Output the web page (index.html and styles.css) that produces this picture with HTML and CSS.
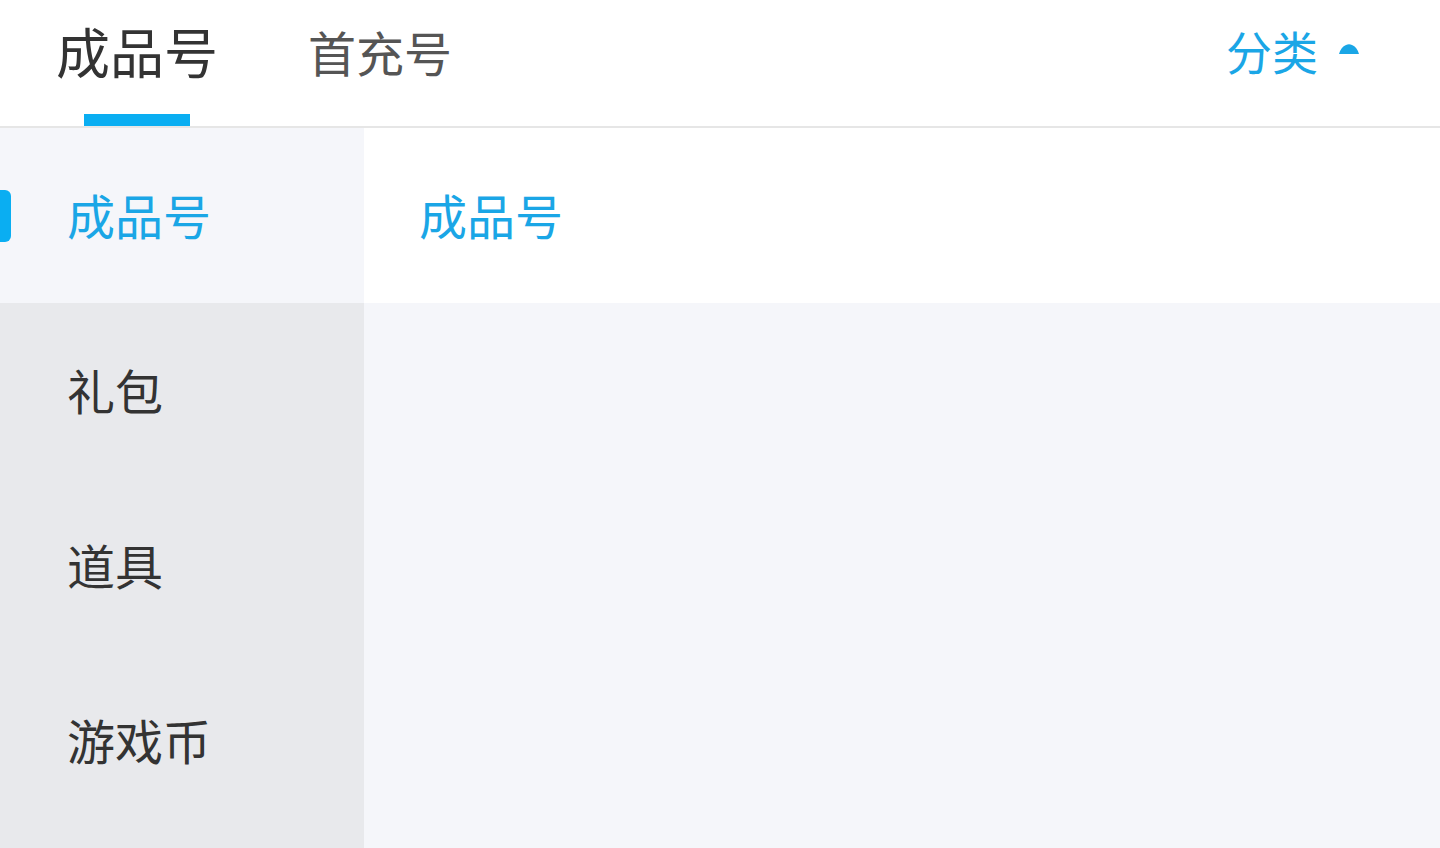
FILE: index.html
```html
<!DOCTYPE html>
<html lang="zh-CN">
<head>
    <meta charset="UTF-8">
    <meta name="viewport" content="width=device-width, initial-scale=1.0">
    <title>分类</title>
    <link rel="stylesheet" href="styles.css">
</head>
<body>
    <!-- 顶部标签 -->
    <div class="top-bar">
        <div class="tabs">
            <div class="tab active">成品号</div>
            <div class="tab">首充号</div>
        </div>
        <div class="category-toggle">
            <span>分类</span>
            <svg class="caret" width="22" height="12" viewBox="0 0 22 12">
                <path d="M1 11 Q3 4 8 2 Q11 0.5 14 2 Q19 4 21 11 Z" fill="#1aa6e6"/>
            </svg>
        </div>
    </div>

    <div class="main">
        <!-- 左侧分类 -->
        <div class="side-menu">
            <div class="side-item active">成品号</div>
            <div class="side-item">礼包</div>
            <div class="side-item">道具</div>
            <div class="side-item">游戏币</div>
        </div>

        <!-- 右侧内容 -->
        <div class="content">
            <div class="content-item">成品号</div>
        </div>
    </div>
</body>
</html>
```

FILE: styles.css
```css
/* 通用 */
body {
    margin: 0;
    padding: 0;
    font-family: "Noto Sans CJK SC", "Noto Sans", sans-serif;
    background-color: #f5f6fa;
    height: 848px;
    overflow: hidden;
}

/* 顶部标签 */
.top-bar {
    height: 126px;
    background-color: #ffffff;
    border-bottom: 2px solid #e6e6e6;
    display: flex;
    justify-content: space-between;
    align-items: stretch;
    padding: 0 80px 0 56px;
}

.tabs {
    display: flex;
    gap: 90px;
}

.tab {
    position: relative;
    font-size: 48px;
    color: #555555;
    padding-top: 21px;
    line-height: 60px;
}

.tab.active {
    font-size: 54px;
    color: #333333;
}

.tab.active::after {
    content: "";
    position: absolute;
    left: 28px;
    bottom: 0;
    width: 106px;
    height: 12px;
    background-color: #0aaef2;
}

.category-toggle {
    display: flex;
    align-items: center;
    gap: 20px;
    height: 100px;
    font-size: 46px;
    color: #1aa6e6;
}

.caret {
    margin-top: -2px;
}

/* 主体 */
.main {
    display: flex;
    height: 720px;
}

.side-menu {
    width: 364px;
    background-color: #e8e9ec;
}

.side-item {
    position: relative;
    height: 175px;
    box-sizing: border-box;
    padding-bottom: 4px;
    display: flex;
    align-items: center;
    padding-left: 67px;
    font-size: 48px;
    color: #333333;
}

.side-item.active {
    background-color: #f5f6fa;
    color: #1aa6e6;
}

.side-item.active::before {
    content: "";
    position: absolute;
    left: 0;
    top: 62px;
    width: 11px;
    height: 52px;
    border-radius: 0 6px 6px 0;
    background-color: #0aaef2;
}

.content {
    flex: 1;
}

.content-item {
    height: 175px;
    box-sizing: border-box;
    padding-bottom: 4px;
    background-color: #ffffff;
    display: flex;
    align-items: center;
    padding-left: 55px;
    font-size: 48px;
    color: #1aa6e6;
}
```
